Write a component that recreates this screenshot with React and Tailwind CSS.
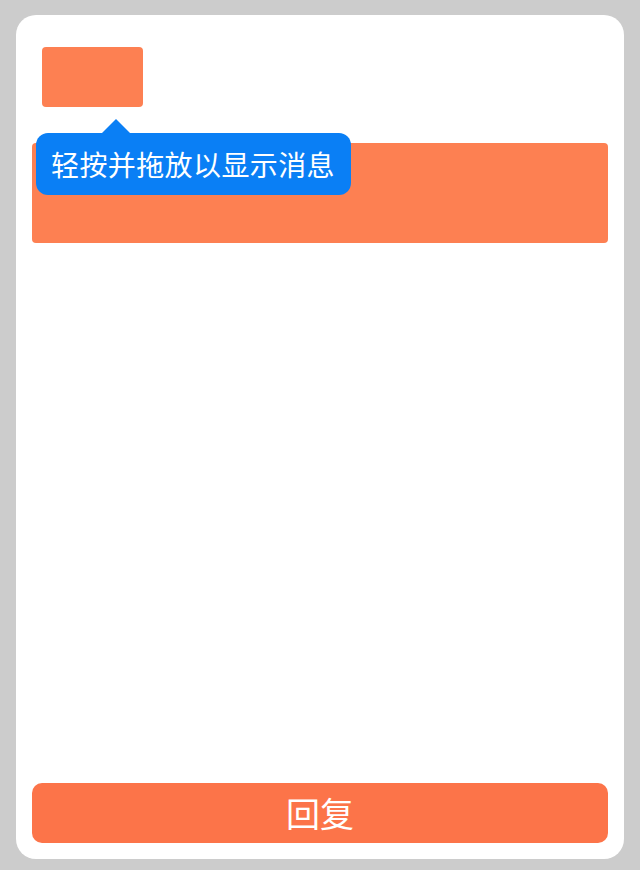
import React from "react";

const App = () => {
  return (
    <div
      className="w-[640px] h-[870px] bg-[#cccccc] pt-[15px] px-4"
      style={{ fontFamily: '"Noto Sans CJK SC", "Noto Sans", sans-serif' }}
    >
      <div className="relative h-[844px] bg-white rounded-[20px] flex flex-col px-4 pt-8 pb-4">
        <div className="ml-[10px] w-[101px] h-[60px] bg-[#fd8052] rounded-[4px]" />
        <div className="mt-9 h-[100px] bg-[#fd8052] rounded-[4px]" />
        <div className="flex-1" />
        <button className="h-[60px] w-full bg-[#fc7449] rounded-[10px] text-white text-[34px] leading-none flex items-center justify-center">
          回复
        </button>

        {/* tooltip */}
        <div className="absolute left-[20px] top-[104px] flex flex-col items-start">
          <div className="ml-[66px] w-0 h-0 border-l-[14px] border-r-[14px] border-b-[14px] border-l-transparent border-r-transparent border-b-[#0a7ff5]" />
          <div className="h-[62px] pl-[15px] pr-[16px] bg-[#0a7ff5] rounded-[12px] text-white text-[28px] tracking-[0.4px] leading-none flex items-center whitespace-nowrap">
            轻按并拖放以显示消息
          </div>
        </div>
      </div>
    </div>
  );
};

export default App;
